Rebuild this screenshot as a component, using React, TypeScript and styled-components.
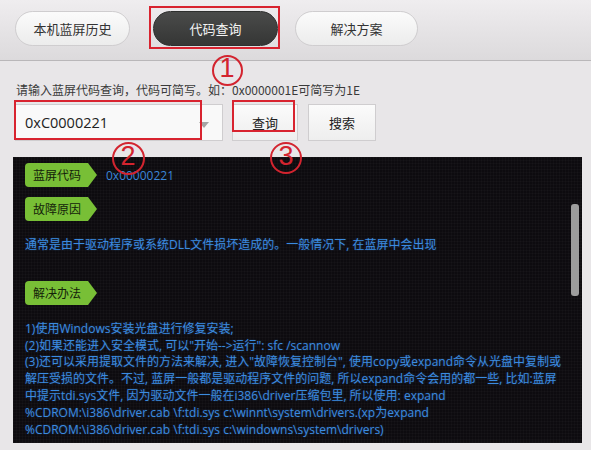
import React from "react";
import styled, { createGlobalStyle } from "styled-components";

const Global = createGlobalStyle`
  html, body { margin: 0; padding: 0; background: #e8e6e8; }
  body { font-family: "Noto Sans CJK SC", "Noto Sans", sans-serif; }
`;

const Page = styled.div`
  position: relative;
  width: 591px;
  height: 450px;
  overflow: hidden;
  background: #e8e6e8;
`;

const TopBar = styled.div`
  height: 61px;
  box-sizing: border-box;
  border-bottom: 1px solid #b9b7b9;
  background: linear-gradient(#efedef, #dcdadc);
  display: flex;
  align-items: flex-start;
  padding: 11px 0 0 15px;
`;

const Tab = styled.div<{ $active?: boolean; $w: number; $ml: number }>`
  position: relative;
  width: ${(p) => p.$w}px;
  margin-left: ${(p) => p.$ml}px;
  height: 35px;
  box-sizing: border-box;
  border-radius: 18px;
  display: flex;
  align-items: center;
  justify-content: center;
  font-size: 13px;
  color: ${(p) => (p.$active ? "#f4f4f4" : "#333")};
  border: 1px solid ${(p) => (p.$active ? "#2e2f2e" : "#cfcdcf")};
  background: ${(p) =>
    p.$active
      ? "linear-gradient(#4a4b4a, #353635)"
      : "linear-gradient(#fbfbfb, #ececec)"};
`;

const RedBox = styled.div<{ $t: number; $l: number; $r: number; $b: number }>`
  position: absolute;
  top: ${(p) => p.$t}px;
  left: ${(p) => p.$l}px;
  right: ${(p) => p.$r}px;
  bottom: ${(p) => p.$b}px;
  border: 2px solid #d8232f;
  pointer-events: none;
`;

const Hint = styled.div`
  margin: 20px 0 0 16px;
  font-size: 12px;
  line-height: 17px;
  color: #3a3a3a;
`;

const QueryRow = styled.div`
  display: flex;
  align-items: flex-start;
  margin: 6px 0 0 15px;
  height: 37px;
`;

const InputBox = styled.div`
  position: relative;
  width: 208px;
  height: 37px;
  box-sizing: border-box;
  border: 1px solid #cfcdcf;
  background: #f9f9f9;
  display: flex;
  align-items: center;
  padding-left: 9px;
  font-family: "Open Sans", "Noto Sans", sans-serif;
  font-size: 14.5px;
  color: #222;
`;

const Arrow = styled.span`
  position: absolute;
  right: 13px;
  top: 17px;
  width: 0;
  height: 0;
  border-left: 5px solid transparent;
  border-right: 5px solid transparent;
  border-top: 6px solid #a5a5a5;
`;

const Button = styled.div<{ $w: number; $ml: number }>`
  position: relative;
  width: ${(p) => p.$w}px;
  margin-left: ${(p) => p.$ml}px;
  height: 37px;
  box-sizing: border-box;
  border: 1px solid #cfcdcf;
  background: linear-gradient(#fbfbfb, #eeeeee);
  display: flex;
  align-items: center;
  justify-content: center;
  font-size: 13px;
  color: #222;
`;

const Panel = styled.div`
  position: relative;
  margin: 16px 0 0 13px;
  width: 569px;
  height: 286px;
  box-sizing: border-box;
  background-color: #0d0b0f;
  background-image: repeating-linear-gradient(
      90deg,
      rgba(255, 255, 255, 0.018) 0 1px,
      transparent 1px 3px
    ),
    repeating-linear-gradient(0deg, rgba(255, 255, 255, 0.018) 0 1px, transparent 1px 3px);
  padding: 6px 0 0 12px;
  color: #3b8be0;
  font-family: "Open Sans", "Noto Sans CJK SC", sans-serif;
  font-size: 12px;
  overflow: hidden;
`;

const LabelRow = styled.div<{ $mt: number }>`
  display: flex;
  align-items: center;
  margin-top: ${(p) => p.$mt}px;
  height: 24px;
`;

const Label = styled.div`
  position: relative;
  height: 24px;
  width: 63px;
  box-sizing: border-box;
  background: #78bf36;
  border-radius: 4px 0 0 4px;
  color: #14220a;
  font-family: "Noto Sans CJK SC", sans-serif;
  font-size: 12px;
  line-height: 24px;
  padding-left: 8px;
  &::after {
    content: "";
    position: absolute;
    right: -9px;
    top: 0;
    width: 0;
    height: 0;
    border-top: 12px solid transparent;
    border-bottom: 12px solid transparent;
    border-left: 9px solid #78bf36;
  }
`;

const Value = styled.span`
  margin-left: 18px;
  font-size: 12px;
  color: #3b86d8;
`;

const Para = styled.div<{ $mt: number }>`
  margin-top: ${(p) => p.$mt}px;
  line-height: 16.8px;
  white-space: nowrap;
  text-shadow: 0 0 2px rgba(60, 140, 230, 0.35);
`;

const ScrollThumb = styled.div`
  position: absolute;
  right: 3px;
  top: 47px;
  width: 8px;
  height: 92px;
  border-radius: 3px;
  background: #9c9c9c;
`;

const Circled = styled.div<{ $x: number; $y: number; $d: number }>`
  position: absolute;
  left: ${(p) => p.$x - p.$d / 2}px;
  top: ${(p) => p.$y - p.$d / 2}px;
  width: ${(p) => p.$d}px;
  height: ${(p) => p.$d}px;
  box-sizing: border-box;
  border: 2px solid #d3242f;
  border-radius: 50%;
  color: #d3242f;
  font-family: "Liberation Sans", sans-serif;
  font-size: 27px;
  line-height: 1;
  padding-bottom: 3px;
  display: flex;
  align-items: center;
  justify-content: center;
`;

export default function App() {
  return (
    <Page>
      <Global />
      <TopBar>
        <Tab $w={115} $ml={0}>本机蓝屏历史</Tab>
        <Tab $w={125} $ml={23} $active>
          代码查询
          <RedBox $t={-6} $l={-5} $r={-3} $b={-4} />
        </Tab>
        <Tab $w={123} $ml={17}>解决方案</Tab>
      </TopBar>
      <Hint>请输入蓝屏代码查询，代码可简写。如：0x0000001E可简写为1E</Hint>
      <QueryRow>
        <InputBox>
          0xC0000221
          <Arrow />
          <RedBox $t={-5} $l={-2} $r={20} $b={0} />
        </InputBox>
        <Button $w={66} $ml={9}>
          查询
          <RedBox $t={-5} $l={-1} $r={2} $b={8} />
        </Button>
        <Button $w={68} $ml={10}>搜索</Button>
      </QueryRow>
      <Panel>
        <LabelRow $mt={0}>
          <Label>蓝屏代码</Label>
          <Value>0x00000221</Value>
        </LabelRow>
        <LabelRow $mt={10}>
          <Label>故障原因</Label>
        </LabelRow>
        <Para $mt={16}>通常是由于驱动程序或系统DLL文件损坏造成的。一般情况下, 在蓝屏中会出现</Para>
        <LabelRow $mt={27}>
          <Label>解决办法</Label>
        </LabelRow>
        <Para $mt={16}>
          1)使用Windows安装光盘进行修复安装;
          <br />
          (2)如果还能进入安全模式, 可以"开始--&gt;运行": sfc /scannow
          <br />
          (3)还可以采用提取文件的方法来解决, 进入"故障恢复控制台", 使用copy或expand命令从光盘中复制或
          <br />
          解压受损的文件。不过, 蓝屏一般都是驱动程序文件的问题, 所以expand命令会用的都一些, 比如:蓝屏
          <br />
          中提示tdi.sys文件, 因为驱动文件一般在i386\driver压缩包里, 所以使用: expand
          <br />
          %CDROM:\i386\driver.cab \f:tdi.sys c:\winnt\system\drivers.(xp为expand
          <br />
          %CDROM:\i386\driver.cab \f:tdi.sys c:\windowns\system\drivers)
        </Para>
        <ScrollThumb />
      </Panel>
      <Circled $x={227} $y={70} $d={31}>1</Circled>
      <Circled $x={128} $y={158} $d={33}>2</Circled>
      <Circled $x={286} $y={158} $d={32}>3</Circled>
    </Page>
  );
}
